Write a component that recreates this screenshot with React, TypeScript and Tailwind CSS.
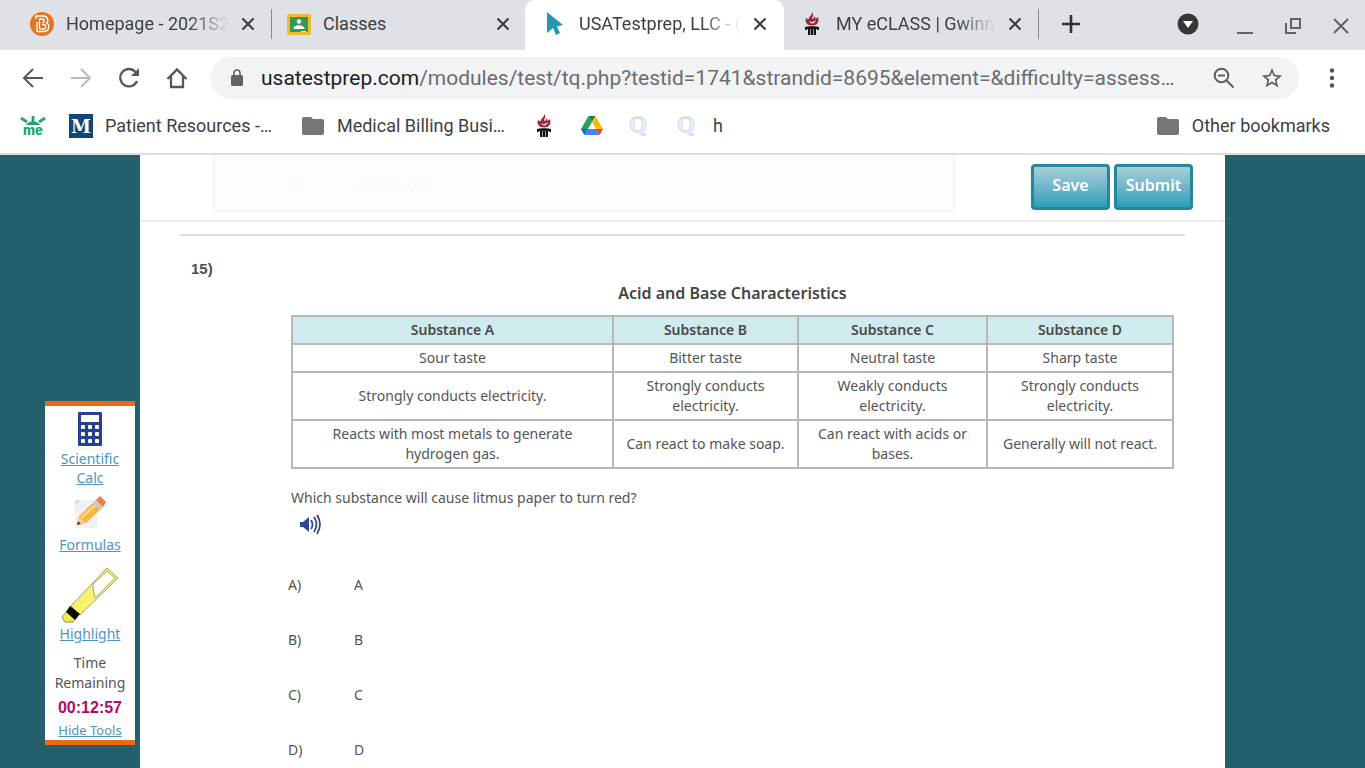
import { ReactNode } from 'react';

type Tab = {
  title: string;
  icon: ReactNode;
  width: string;
  padding: string;
  fade?: boolean;
  divider?: boolean;
};

const HEADERS = ['Substance A', 'Substance B', 'Substance C', 'Substance D'];

const ROWS = [
  ['Sour taste', 'Bitter taste', 'Neutral taste', 'Sharp taste'],
  ['Strongly conducts electricity.', 'Strongly conducts electricity.', 'Weakly conducts electricity.', 'Strongly conducts electricity.'],
  ['Reacts with most metals to generate hydrogen gas.', 'Can react to make soap.', 'Can react with acids or bases.', 'Generally will not react.'],
];

const ANSWERS = ['A', 'B', 'C', 'D'];

function BrightspaceIcon() {
  return (
    <svg width="24" height="24" viewBox="0 0 24 24" fill="none">
      <circle cx="12" cy="12" r="12" fill="#e0761f" />
      <g stroke="#fff" strokeWidth="1.3" strokeLinejoin="round">
        <path d="M6 7V4h7c5 0 6 5 3.500 7 4 2 2.500 8.500-2.500 8.500H7V10" />
        <path d="M9.500 17V7h3c2.500 0 2.500 3.500 0 3.500M9.500 17h4c3 0 3-4.500 0-4.500h-1.500" />
      </g>
    </svg>
  );
}

function ClassroomIcon() {
  return (
    <svg width="24" height="21" viewBox="0 0 24 21">
      <rect width="24" height="21" rx="1.5" fill="#f0bc2d" />
      <rect x="3" y="3" width="18" height="15" fill="#2f9a56" />
      <circle cx="12" cy="7.5" r="2.2" fill="#fff" />
      <path d="M6.500 15c0-5 11-5 11 0z" fill="#fff" />
      <path d="M14 17h5v1h-5z" fill="#e6f2ea" />
    </svg>
  );
}

function CursorIcon() {
  return (
    <svg width="18" height="24" viewBox="0 0 18 24">
      <path d="M1 0l16 13-6 1.500 3 6.500-4 2-3-7-6 5z" fill="#2397b4" />
    </svg>
  );
}

function TorchIcon() {
  return (
    <svg width="16" height="24" viewBox="0 0 16 24">
      <path d="M8.500 0c2 3-1 5 0 7 1 0 2-1 2-3 1 1 1 2 1 3l2.500-2c1.500 5-1 8.500-6 8.500S.5 10 2 5.500c1 2 2 2 3 1C5 4 8 3.500 8.500 0z" fill="#9c2735" />
      <path d="M5 9.500c2 1 5 .5 7-1.500-1 4-5 4.500-7 1.500z" fill="#f3e3e5" />
      <path d="M1 15c2-1 12-1 14 0v3h-2v-1h-1v6H4v-6H3v1H1z" fill="#151515" />
      <path d="M6.500 17v6M9.500 17v6" stroke="#bbb" strokeWidth=".8" />
    </svg>
  );
}

function CloseIcon() {
  return (
    <svg width="14" height="14" viewBox="0 0 14 14">
      <path d="M1.500 1.500l11 11M12.500 1.500l-11 11" stroke="#3c4043" strokeWidth="2.2" />
    </svg>
  );
}

function FolderIcon() {
  return (
    <svg width="22" height="18" viewBox="0 0 22 18">
      <path d="M2 0h7l2 2h9a2 2 0 0 1 2 2v12a2 2 0 0 1-2 2H2a2 2 0 0 1-2-2V2a2 2 0 0 1 2-2z" fill="#74777a" />
    </svg>
  );
}

function MeIcon() {
  return (
    <svg width="26" height="22" viewBox="0 0 26 22">
      <path d="M1 3l6 4M25 3l-6 4M13 1v6" stroke="#22a565" strokeWidth="2.8" />
      <path d="M6 10c3-5 11-5 14 0z" fill="#22a565" />
      <text x="13" y="20" textAnchor="middle" fontSize="13" fontWeight="800" fontFamily="Inter, sans-serif" fill="#22a565">me</text>
    </svg>
  );
}

function MichiganIcon() {
  return (
    <svg width="24" height="24" viewBox="0 0 24 24">
      <rect width="24" height="24" fill="#104679" />
      <text x="12" y="19" textAnchor="middle" fontFamily="DejaVu Serif, serif" fontWeight="700" fontSize="18" fill="#fff">M</text>
    </svg>
  );
}

function DriveIcon() {
  return (
    <svg width="22" height="20" viewBox="0 0 22 20">
      <path d="M7.500 0L0 13l3.500 6L11 6z" fill="#23a455" />
      <path d="M7.500 0h7L11 6z" fill="#188038" />
      <path d="M14.500 0L22 13h-7L11 6z" fill="#fbbc04" />
      <path d="M0 13h7l-3.500 6z" fill="#1967d2" />
      <path d="M7 13h8l3.500 6h-15z" fill="#4285f4" />
      <path d="M15 13h7l-3.500 6z" fill="#ea4335" />
    </svg>
  );
}

function QuizIcon() {
  return (
    <svg width="20" height="24" viewBox="0 0 20 24">
      <text x="10" y="18" textAnchor="middle" fontFamily="Liberation Serif, serif" fontWeight="700" fontSize="23" fill="#eef0f8" stroke="#cdd1e3" strokeWidth=".8">Q</text>
    </svg>
  );
}

function CalculatorIcon() {
  return (
    <svg width="26" height="34" viewBox="0 0 26 34">
      <rect x="1" y="0" width="24" height="34" rx="1" fill="#27418f" />
      <path d="M4 3h18v7H4z" fill="#fff" />
      {[13, 20, 27].map(y =>
        [4, 11, 18].map(x => <rect key={`${x}-${y}`} x={x} y={y} width="4" height="4" rx="1" fill="#fff" />)
      )}
    </svg>
  );
}

function PencilIcon() {
  return (
    <svg width="34" height="36" viewBox="0 0 34 36">
      <path d="M2 5h22v28H2z" fill="#f1f1f4" />
      <path d="M2 5h6l-6 6z" fill="#dcdce0" />
      <path d="M4 30l2-9L23 5l7 7-17 16z" fill="#f5b640" />
      <path d="M8 23L25 8" stroke="#fbd477" strokeWidth="3" />
      <path d="M4 30l2-8 6 6z" fill="#edd2a5" />
      <path d="M4 30l1-4 3 3z" fill="#444" />
      <path d="M20 8l3-3 7 7-3 3z" fill="#c6c8d2" />
      <path d="M23 5l4-4 6 6-3 5z" fill="#ee7d43" />
    </svg>
  );
}

function HighlighterIcon() {
  return (
    <svg width="58" height="57" viewBox="0 0 58 57">
      <path d="M10 39L46 1l11 10-38 37z" fill="#f6f46c" stroke="#a3a16c" strokeWidth="1" />
      <path d="M32 22V17L46 4l8 7-20 20z" fill="#fff" stroke="#a5a471" strokeWidth="1" />
      <path d="M1 50l6-7 9 7-4 5H4z" fill="#f2ea51" stroke="#96935c" strokeWidth="1" />
      <path d="M9 39l10 8-5 6-9-8z" fill="#080808" />
    </svg>
  );
}

function SpeakerIcon() {
  return (
    <svg width="22" height="22" viewBox="0 0 22 22" fill="none" stroke="#2b4793" strokeWidth="1.8">
      <path d="M0 8h3l6-5v15l-6-5H0z" fill="#2b4793" stroke="none" />
      <path d="M11 6q3 5 0 9M14 3q5 7 0 15M17 1q6 9 0 19" />
    </svg>
  );
}

const TABS: Tab[] = [
  { title: 'Homepage - 2021S2', icon: <BrightspaceIcon />, width: 'w-[240px]', padding: 'pr-[17px]', fade: true, divider: true },
  { title: 'Classes', icon: <ClassroomIcon />, width: 'w-[255px]', padding: 'pl-[17px] pr-[15px]' },
  { title: 'USATestprep, LLC - (', icon: <CursorIcon />, width: 'w-[259px] rounded-t-[10px] bg-white', padding: 'pl-[18px] pr-[18px]', fade: true },
  { title: 'MY eCLASS | Gwinn', icon: <TorchIcon />, width: 'w-[254px]', padding: 'pl-[16px] pr-[16px]', fade: true, divider: true },
];

function TabStrip() {
  return (
    <div className="flex h-[50px] items-center bg-[#dee1e6] pl-[30px]">
      {TABS.map(tab => (
        <div key={tab.title} className={`flex h-full shrink-0 items-center pb-[2px] ${tab.width} ${tab.padding}`}>
          <span className="flex w-6 shrink-0 justify-center">{tab.icon}</span>
          <span className={`ml-3 flex-1 whitespace-nowrap text-lg text-[#3c4043] ${tab.fade ? '[mask-image:linear-gradient(to_right,black_75%,transparent)]' : ''}`}>
            {tab.title}
          </span>
          <button aria-label={`Close ${tab.title}`} className="ml-3 shrink-0"><CloseIcon /></button>
          {tab.divider && <span className="-mr-[17px] ml-4 h-[30px] w-px shrink-0 bg-[#85888c]" />}
        </div>
      ))}
      <button aria-label="New tab" className="ml-6 pb-[2px]">
        <svg width="18" height="18" viewBox="0 0 18 18"><path d="M9 0v18M0 9h18" stroke="#303236" strokeWidth="2.6" /></svg>
      </button>
      <div className="ml-auto flex items-center gap-8 pr-4">
        <button aria-label="Search tabs" className="mr-[6px] pb-[2px]">
          <svg width="22" height="22" viewBox="0 0 22 22"><circle cx="11" cy="11" r="10.5" fill="#35373b" /><path d="M6 8h10l-5 7z" fill="#fff" /></svg>
        </button>
        <button aria-label="Minimize" className="pt-4"><span className="block h-[2px] w-4 bg-[#606367]" /></button>
        <button aria-label="Restore" className="pt-[2px]">
          <svg width="16" height="16" viewBox="0 0 16 16" fill="none" stroke="#606367" strokeWidth="2"><path d="M6 1h9v9H6zM1 5v10h10" /></svg>
        </button>
        <button aria-label="Close window" className="pt-[2px]">
          <svg width="16" height="16" viewBox="0 0 16 16"><path d="M1 1l14 14M15 1L1 15" stroke="#606367" strokeWidth="2" /></svg>
        </button>
      </div>
    </div>
  );
}

function Toolbar() {
  return (
    <div className="flex h-[55px] items-center pl-[21px] pr-[30px]">
      <div className="flex shrink-0 gap-6">
        <button aria-label="Back">
          <svg width="24" height="24" viewBox="0 0 24 24" fill="none" stroke="#55585c" strokeWidth="2"><path d="M22 12H3M12 3l-9 9 9 9" /></svg>
        </button>
        <button aria-label="Forward">
          <svg width="24" height="24" viewBox="0 0 24 24" fill="none" stroke="#b9bbbe" strokeWidth="2"><path d="M2 12h19M12 3l9 9-9 9" /></svg>
        </button>
        <button aria-label="Reload">
          <svg width="24" height="24" viewBox="0 0 24 24" fill="none" stroke="#55585c" strokeWidth="2.3"><path d="M20 15a8.700 8.700 0 1 1-1.500-9" /><path d="M22 2v8h-8z" fill="#55585c" stroke="none" /></svg>
        </button>
        <button aria-label="Home">
          <svg width="24" height="24" viewBox="0 0 24 24" fill="none" stroke="#55585c" strokeWidth="2.3"><path d="M2.500 13L12 3.500l9.500 9.500M6 10v11h12V10" /></svg>
        </button>
      </div>
      <div className="ml-[21px] flex h-[42px] min-w-0 flex-1 items-center rounded-full bg-[#f1f3f4] pl-[21px] pr-4">
        <svg width="12" height="17" viewBox="0 0 12 17" className="shrink-0"><path d="M3 7V4a3 3 0 0 1 6 0v3" fill="none" stroke="#606367" strokeWidth="1.6" /><rect y="6" width="12" height="11" rx="1.5" fill="#606367" /></svg>
        <div className="ml-[18px] flex-1 whitespace-nowrap text-[21px] leading-7 text-[#6a6d71]">
          <span className="text-[#202124]">usatestprep.com</span>/modules/test/tq.php?testid=1741&amp;strandid=8695&amp;element=&amp;difficulty=assess…
        </div>
        <button aria-label="Zoom out">
          <svg width="22" height="22" viewBox="0 0 22 22" fill="none" stroke="#5b5e62" strokeWidth="2"><circle cx="8.500" cy="8.500" r="6.8" /><path d="M13.500 13.500l7 7M5 8.500h7" /></svg>
        </button>
        <button aria-label="Bookmark this tab" className="ml-[26px]">
          <svg width="22" height="22" viewBox="0 0 24 24" fill="#5b5e62"><path d="M23 9.200l-7.900-.7L12 1 8.900 8.500 1 9.200l6 5.200L5.200 22 12 18l6.800 4-1.800-7.600zM12 15.900l-4.100 2.500 1.100-4.700-3.600-3.100 4.700-.4L12 5.800l1.900 4.400 4.700.4-3.600 3.100 1.100 4.700z" /></svg>
        </button>
      </div>
      <button aria-label="Browser menu" className="ml-[30px]">
        <svg width="6" height="20" viewBox="0 0 6 20" fill="#505357"><circle cx="3" cy="2.500" r="2.2" /><circle cx="3" cy="10" r="2.2" /><circle cx="3" cy="17.500" r="2.2" /></svg>
      </button>
    </div>
  );
}

function Bookmarks() {
  return (
    <nav className="flex h-[50px] items-center border-b-2 border-[#dadcdd] pb-[6px] pl-5 pr-[35px] text-lg text-[#3c4043]">
      <a href="#" aria-label="me"><MeIcon /></a>
      <a href="#" className="ml-[23px] flex items-center"><MichiganIcon /><span className="ml-3">Patient Resources -…</span></a>
      <a href="#" className="ml-[30px] flex items-center"><FolderIcon /><span className="ml-[13px]">Medical Billing Busi…</span></a>
      <a href="#" aria-label="eCLASS" className="ml-[31px]"><TorchIcon /></a>
      <a href="#" aria-label="Drive" className="ml-[29px]"><DriveIcon /></a>
      <a href="#" aria-label="Quiz" className="ml-[25px]"><QuizIcon /></a>
      <a href="#" className="ml-7 flex items-center"><QuizIcon /><span className="ml-[17px]">h</span></a>
      <a href="#" className="ml-auto flex items-center"><FolderIcon /><span className="ml-[13px]">Other bookmarks</span></a>
    </nav>
  );
}

function ToolsPanel() {
  return (
    <aside className="flex w-[90px] flex-col items-center border-y-[5px] border-[#ec6b12] bg-white text-center text-sm text-[#555]">
      <a href="#" className="flex flex-col items-center pt-[6px] text-[#4f94bf] underline">
        <CalculatorIcon />
        <span className="mt-[3px] leading-[19px]">Scientific<br />Calc</span>
      </a>
      <a href="#" className="mt-2 flex flex-col items-center text-[#4f94bf] underline">
        <PencilIcon />
        <span className="mt-1 leading-5">Formulas</span>
      </a>
      <a href="#" className="mt-3 flex flex-col items-center text-[#4f94bf] underline">
        <HighlighterIcon />
        <span className="leading-5">Highlight</span>
      </a>
      <p className="mt-[9px] leading-5">Time<br />Remaining</p>
      <p className="mt-[5px] font-['Liberation_Sans',Arial,sans-serif] text-base font-bold leading-5 text-[#b0086e]">00:12:57</p>
      <button className="mt-[2px] text-[13px] leading-5 text-[#4f94bf] underline">Hide Tools</button>
    </aside>
  );
}

function QuestionTable() {
  return (
    <table className="w-full table-fixed border-collapse text-center text-sm leading-5">
      <caption className="pb-3 text-base font-semibold leading-5 text-[#444]">Acid and Base Characteristics</caption>
      <colgroup>
        <col className="w-[321px]" />
        <col className="w-[185px]" />
        <col className="w-[189px]" />
        <col />
      </colgroup>
      <thead>
        <tr className="bg-[#cfebee]">
          {HEADERS.map(h => (
            <th key={h} className="border-2 border-[#b8b8b8] px-2 py-[3px] font-semibold text-[#4a4a4a]">{h}</th>
          ))}
        </tr>
      </thead>
      <tbody>
        {ROWS.map(row => (
          <tr key={row[0]}>
            {row.map((cell, i) => (
              <td key={HEADERS[i]} className={`border-2 border-[#b8b8b8] py-[3px] ${i === 0 ? 'px-7' : i === 2 ? 'px-4' : 'px-2'}`}>{cell}</td>
            ))}
          </tr>
        ))}
      </tbody>
    </table>
  );
}

function Question() {
  return (
    <section className="mx-10 mt-3 border-t-2 border-[#dedede] pt-[23px]">
      <h2 className="pl-[11px] font-['Liberation_Sans',Arial,sans-serif] text-[15px] font-bold leading-5 text-[#505050]">15)</h2>
      <div className="ml-[111px] mr-[11px] mt-1">
        <QuestionTable />
        <p className="mt-[19px] text-sm leading-5">Which substance will cause litmus paper to turn red?</p>
        <button aria-label="Read question aloud" className="ml-[9px] mt-[6px] block"><SpeakerIcon /></button>
      </div>
      <ul className="ml-[108px] mt-[39px] text-sm leading-5">
        {ANSWERS.map(a => (
          <li key={a} className="mb-[35px]">
            <button className="flex"><span className="w-[66px] text-left">{a})</span><span>{a}</span></button>
          </li>
        ))}
      </ul>
    </section>
  );
}

export default function App() {
  return (
    <div className="flex h-screen flex-col overflow-hidden bg-white font-[Roboto,sans-serif]">
      <header className="shrink-0">
        <TabStrip />
        <Toolbar />
        <Bookmarks />
      </header>
      <div className="flex min-h-0 flex-1 bg-[#245f6c] font-['Noto_Sans',sans-serif] text-[#555]">
        <div className="w-[140px] shrink-0 pl-[45px] pt-[246px]">
          <ToolsPanel />
        </div>
        <main className="min-w-0 flex-1 overflow-hidden bg-white">
          <div className="flex items-start justify-between border-b-2 border-[#ececec] pb-2 pl-[73px] pr-8 pt-[1px]">
            <div className="flex h-[56px] w-[742px] items-center border-2 border-[#f7f7f8] bg-[#fcfdff] pl-[74px] text-sm text-[#f7f8fa]">
              <span className="w-[66px]">D)</span>
              <span>semidiurnal</span>
            </div>
            <div className="flex gap-1 pt-2">
              <button className="h-[46px] w-[79px] rounded border-[3px] border-[#27869b] bg-linear-to-b from-[#a6ced9] to-[#279fba] pb-1 text-base font-semibold text-white">Save</button>
              <button className="h-[46px] w-[79px] rounded border-[3px] border-[#27869b] bg-linear-to-b from-[#a6ced9] to-[#279fba] pb-1 text-base font-semibold text-white">Submit</button>
            </div>
          </div>
          <Question />
        </main>
        <div className="w-[140px] shrink-0" />
      </div>
    </div>
  );
}
